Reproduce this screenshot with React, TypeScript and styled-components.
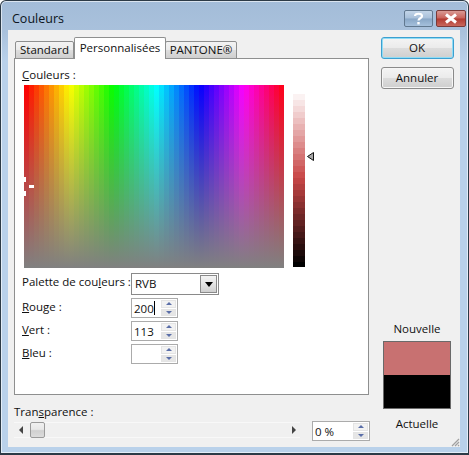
import styled, { createGlobalStyle } from "styled-components";

const GlobalStyle = createGlobalStyle`
  html, body { margin: 0; padding: 0; background: #fff; }
  body { font-family: "Open Sans", "Liberation Sans", sans-serif; font-size: 11.5px; color: #101010; }
`;

const Dialog = styled.div`
  box-sizing: border-box;
  width: 469px;
  height: 455px;
  display: flex;
  flex-direction: column;
  border: 1px solid #2c3a46;
  border-bottom-width: 2px;
  border-radius: 6px 6px 0 0;
  background: linear-gradient(to bottom, #a3bcd8 0, #a9c1dc 30px, #b9d1ea 60px, #b9d1ea 100%);
  box-shadow: inset 0 0 0 1px rgba(255, 255, 255, 0.6);
  overflow: hidden;
`;

const TitleBar = styled.div`
  height: 29px;
  flex: none;
  display: flex;
  padding: 0 2px 0 11px;
  justify-content: space-between;
`;

const Title = styled.div`
  font-size: 12.5px;
  line-height: 36px;
  color: #0c1420;
`;

const CaptionButtons = styled.div`
  display: flex;
  gap: 3px;
  margin: 9px 0 0;
  height: 17px;
`;

const CaptionButton = styled.div<{ $close?: boolean }>`
  box-sizing: border-box;
  width: ${(p) => (p.$close ? 30 : 29)}px;
  height: 17px;
  display: flex;
  align-items: center;
  justify-content: center;
  border: 1px solid ${(p) => (p.$close ? "#7a3a38" : "#61788f")};
  border-radius: 2px;
  background: ${(p) =>
    p.$close
      ? "linear-gradient(to bottom, #d99a94 0, #c9625a 48%, #b23a30 52%, #c8675c 100%)"
      : "linear-gradient(to bottom, #c3d5e8 0, #a8c0da 48%, #88a6c6 52%, #a5c0dc 100%)"};
`;

const Client = styled.div`
  width: 452px;
  margin-left: 7px;
  height: 417px;
  flex: none;
  position: relative;
  background: #f0f0f0;
  display: grid;
  grid-template-columns: 361px 91px;
`;

const LeftColumn = styled.div`
  display: flex;
  flex-direction: column;
  padding: 7px 0 0 6px;
  min-width: 0;
`;

const TabRow = styled.div`
  display: flex;
  align-items: flex-end;
  height: 22px;
  padding-left: 2px;
  position: relative;
  z-index: 1;
  margin-bottom: -1px;
`;

const Tab = styled.div<{ $active?: boolean; $width: number }>`
  box-sizing: border-box;
  width: ${(p) => p.$width}px;
  height: ${(p) => (p.$active ? 22 : 18)}px;
  border: 1px solid #8e8f8f;
  border-bottom: ${(p) => (p.$active ? "none" : "1px solid #8e8f8f")};
  border-left: ${(p) => (p.$active ? "1px solid #8e8f8f" : "1px solid #8e8f8f")};
  border-radius: 2px 2px 0 0;
  background: ${(p) => (p.$active ? "#fff" : "linear-gradient(to bottom, #f3f3f3 0, #ebebeb 50%, #dddddd 52%, #cfcfcf 100%)")};
  text-align: center;
  line-height: ${(p) => (p.$active ? 19 : 16)}px;
  margin-left: ${(p) => (p.$active ? 0 : -1)}px;
`;

const Panel = styled.div`
  box-sizing: border-box;
  width: 355px;
  height: 337px;
  background: #fff;
  border: 1px solid #8e8f8f;
  padding: 8px 0 0 7px;
  display: flex;
  flex-direction: column;
`;

const Underline = styled.span`
  text-decoration: underline;
  text-underline-offset: 1px;
`;

const FieldCaption = styled.div`
  line-height: 16px;
  height: 17px;
`;

const PickerRow = styled.div`
  display: flex;
  margin-left: 2px;
  margin-top: 1px;
  height: 188px;
`;

const Spectrum = styled.div`
  position: relative;
  width: 260px;
  height: 183px;
  flex: none;
`;

const CrossBit = styled.span<{ $x: number; $y: number; $w: number; $h: number }>`
  position: absolute;
  left: ${(p) => p.$x}px;
  top: ${(p) => p.$y}px;
  width: ${(p) => p.$w}px;
  height: ${(p) => p.$h}px;
  background: #fff;
`;

const LumaWrap = styled.div`
  position: relative;
  width: 26px;
  margin-left: 9px;
  padding-top: 3px;
`;

const LumaPointer = styled.svg`
  position: absolute;
  left: 14px;
  top: 67px;
`;

const FormRows = styled.div`
  display: flex;
  flex-direction: column;
  margin-top: 0;
`;

const FormRow = styled.div<{ $height: number }>`
  display: flex;
  align-items: flex-start;
  height: ${(p) => p.$height}px;
`;

const RowLabel = styled.div`
  width: 109px;
  flex: none;
  line-height: 17px;
`;

const SelectBox = styled.div`
  box-sizing: border-box;
  width: 88px;
  height: 22px;
  border: 1px solid #8a8a8a;
  display: flex;
  padding: 1px;
  justify-content: space-between;
`;

const SelectValue = styled.div`
  padding-left: 2px;
  line-height: 18px;
`;

const SelectArrow = styled.div`
  box-sizing: border-box;
  width: 17px;
  border: 1px solid #8a8a8a;
  background: linear-gradient(to bottom, #f4f4f4 0, #e4e4e4 50%, #cfcfcf 100%);
  display: flex;
  align-items: center;
  justify-content: center;
`;

const SpinBox = styled.div<{ $width: number }>`
  box-sizing: border-box;
  width: ${(p) => p.$width}px;
  height: 20px;
  border: 1px solid #ababab;
  background: #fff;
  display: flex;
  justify-content: space-between;
  padding: 1px;
`;

const SpinValue = styled.div`
  padding-left: 1px;
  line-height: 17px;
  display: flex;
  align-items: center;
`;

const Caret = styled.span`
  display: inline-block;
  width: 1px;
  height: 14px;
  background: #000;
`;

const SpinButtons = styled.div`
  width: 15px;
  display: flex;
  flex-direction: column;
  gap: 1px;
`;

const SpinButton = styled.div<{ $down?: boolean }>`
  flex: 1;
  border: 1px solid #e4e4e4;
  background: ${(p) => (p.$down ? "#e6e6e6" : "#f2f2f2")};
  display: flex;
  align-items: center;
  justify-content: center;
  &::before {
    content: "";
    border-left: 3.5px solid transparent;
    border-right: 3.5px solid transparent;
    ${(p) => (p.$down ? "border-top: 3px solid #5a6ea8;" : "border-bottom: 3px solid #5a6ea8;")}
  }
`;

const TransparencyBlock = styled.div`
  margin-top: 9px;
  display: flex;
  flex-direction: column;
`;

const TransparencyRow = styled.div`
  display: grid;
  grid-template-columns: 298px 58px;
  align-items: start;
`;

const ScrollBar = styled.div`
  box-sizing: border-box;
  width: 286px;
  height: 16px;
  margin-top: 1px;
  background: #f0f0f0;
  border-top: 1px solid #f8f8f8;
  border-bottom: 1px solid #f8f8f8;
  display: flex;
  align-items: center;
  justify-content: space-between;
  padding: 0 4px 0 5px;
`;

const ScrollThumb = styled.div`
  box-sizing: border-box;
  width: 15px;
  height: 16px;
  margin: 0 auto 0 7px;
  border: 1px solid #9a9a9a;
  border-radius: 2px;
  background: linear-gradient(to bottom, #f0f0f0 0, #e8e8e8 45%, #d0d0d0 55%, #dcdcdc 100%);
`;

const ScrollArrow = styled.span<{ $right?: boolean }>`
  width: 0;
  height: 0;
  border-top: 4px solid transparent;
  border-bottom: 4px solid transparent;
  ${(p) => (p.$right ? "border-left: 4px solid #444;" : "border-right: 4px solid #444;")}
`;

const RightColumn = styled.div`
  display: flex;
  flex-direction: column;
  align-items: center;
  padding: 7px 7px 0 12px;
`;

const DialogButton = styled.div<{ $default?: boolean }>`
  box-sizing: border-box;
  width: 73px;
  height: 22px;
  flex: none;
  border: 1px solid ${(p) => (p.$default ? "#3c9fd0" : "#8a8a8a")};
  border-radius: 3px;
  background: linear-gradient(to bottom, #f4f4f4 0, #ebebeb 48%, #dcdcdc 52%, #cfcfcf 100%);
  text-align: center;
  line-height: 19px;
  box-shadow: ${(p) => (p.$default ? "inset 0 0 0 1px #8fdcf5" : "inset 0 0 0 1px #f6f6f6")};
  margin-bottom: 8px;
`;

const ColorCaption = styled.div<{ $top: number }>`
  line-height: 16px;
  margin-top: ${(p) => p.$top}px;
`;

const Swatch = styled.div`
  box-sizing: border-box;
  width: 68px;
  height: 68px;
  flex: none;
  margin-top: 4px;
  border: 1px solid #6a6a6a;
  display: flex;
  flex-direction: column;
`;

const SwatchPart = styled.div<{ $color: string }>`
  flex: 1;
  background: ${(p) => p.$color};
`;

const Grip = styled.svg`
  position: absolute;
  right: 0;
  bottom: 0;
`;

const hueColumns = Array.from({ length: 52 }, (_, i) => `hsl(${(i / 52) * 360}, 100%, 50%)`);

const lumaStops = Array.from({ length: 30 }, (_, i) => {
  const t = i / 29;
  const mid = 0.5;
  const base = [200, 70, 70];
  const c = t < mid
    ? base.map((b) => Math.round(255 + (b - 255) * (t / mid)))
    : base.map((b) => Math.round(b * (1 - (t - mid) / mid)));
  return `rgb(${c.join(",")})`;
});

const SpectrumArt = () => (
  <svg width="260" height="183" style={{ display: "block" }}>
    <defs>
      <linearGradient id="fade" x1="0" y1="0" x2="0" y2="1">
        <stop offset="0" stopColor="#808080" stopOpacity="0" />
        <stop offset="1" stopColor="#808080" stopOpacity="1" />
      </linearGradient>
    </defs>
    {hueColumns.map((c, i) => (
      <rect key={i} x={i * 5} y={0} width={5} height={183} fill={c} />
    ))}
    <rect width="260" height="183" fill="url(#fade)" />
  </svg>
);

const Spin = ({ width, value, caret }: { width: number; value?: string; caret?: boolean }) => (
  <SpinBox $width={width}>
    <SpinValue>
      {value}
      {caret && <Caret />}
    </SpinValue>
    <SpinButtons>
      <SpinButton />
      <SpinButton $down />
    </SpinButtons>
  </SpinBox>
);

export default function App() {
  return (
    <>
      <GlobalStyle />
      <Dialog>
        <TitleBar>
          <Title>Couleurs</Title>
          <CaptionButtons>
            <CaptionButton>
              <svg width="11" height="13" viewBox="0 0 11 13">
                <path d="M2 4 C2 1 9 1 9 4 C9 6.500 5.500 6 5.500 8.500" fill="none" stroke="#fff" strokeWidth="2.2" />
                <rect x="4.300" y="10" width="2.400" height="2.400" fill="#fff" />
              </svg>
            </CaptionButton>
            <CaptionButton $close>
              <svg width="14" height="11" viewBox="0 0 14 11">
                <path d="M2 1.500 L12 9.500 M12 1.500 L2 9.500" stroke="#fff" strokeWidth="3" />
              </svg>
            </CaptionButton>
          </CaptionButtons>
        </TitleBar>
        <Client>
          <LeftColumn>
            <TabRow>
              <Tab $width={59}>Standard</Tab>
              <Tab $active $width={92}>Personnalisées</Tab>
              <Tab $width={72}>PANTONE®</Tab>
            </TabRow>
            <Panel>
              <FieldCaption><Underline>C</Underline>ouleurs :</FieldCaption>
              <PickerRow>
                <Spectrum>
                  <SpectrumArt />
                  <CrossBit $x={0} $y={92} $w={2} $h={5} />
                  <CrossBit $x={5} $y={100} $w={5} $h={3} />
                  <CrossBit $x={0} $y={106} $w={2} $h={5} />
                </Spectrum>
                <LumaWrap>
                  <svg width="12" height="179" style={{ display: "block" }}>
                    {lumaStops.map((c, i) => (
                      <rect key={i} x={0} y={i * 6} width={12} height={6} fill={c} />
                    ))}
                  </svg>
                  <LumaPointer width="8" height="9" viewBox="0 0 8 9">
                    <path d="M0.500 4.500 L6.500 0.500 L6.500 8.500 Z" fill="#a8a8a8" stroke="#111" />
                  </LumaPointer>
                </LumaWrap>
              </PickerRow>
              <FormRows>
                <FormRow $height={25}>
                  <RowLabel>Palette de cou<Underline>l</Underline>eurs :</RowLabel>
                  <SelectBox>
                    <SelectValue>RVB</SelectValue>
                    <SelectArrow>
                      <svg width="8" height="5" viewBox="0 0 8 5"><path d="M0 0 H8 L4 5 Z" fill="#000" /></svg>
                    </SelectArrow>
                  </SelectBox>
                </FormRow>
                <FormRow $height={23}>
                  <RowLabel><Underline>R</Underline>ouge :</RowLabel>
                  <Spin width={47} value="200" caret />
                </FormRow>
                <FormRow $height={23}>
                  <RowLabel><Underline>V</Underline>ert :</RowLabel>
                  <Spin width={47} value="113" />
                </FormRow>
                <FormRow $height={23}>
                  <RowLabel><Underline>B</Underline>leu :</RowLabel>
                  <Spin width={47} />
                </FormRow>
              </FormRows>
            </Panel>
            <TransparencyBlock>
              <FieldCaption>Tran<Underline>s</Underline>parence :</FieldCaption>
              <TransparencyRow>
                <ScrollBar>
                  <ScrollArrow />
                  <ScrollThumb />
                  <ScrollArrow $right />
                </ScrollBar>
                <Spin width={58} value="0 %" />
              </TransparencyRow>
            </TransparencyBlock>
          </LeftColumn>
          <RightColumn>
            <DialogButton $default>OK</DialogButton>
            <DialogButton>Annuler</DialogButton>
            <ColorCaption $top={224}>Nouvelle</ColorCaption>
            <Swatch>
              <SwatchPart $color="#c87171" />
              <SwatchPart $color="#000" />
            </Swatch>
            <ColorCaption $top={7}>Actuelle</ColorCaption>
          </RightColumn>
          <Grip width="9" height="9" viewBox="0 0 9 9">
            <path d="M8 1 L1 8 M8 4 L4 8 M8 7 L7 8" stroke="#a0a0a0" strokeWidth="1.200" />
          </Grip>
        </Client>
      </Dialog>
    </>
  );
}
